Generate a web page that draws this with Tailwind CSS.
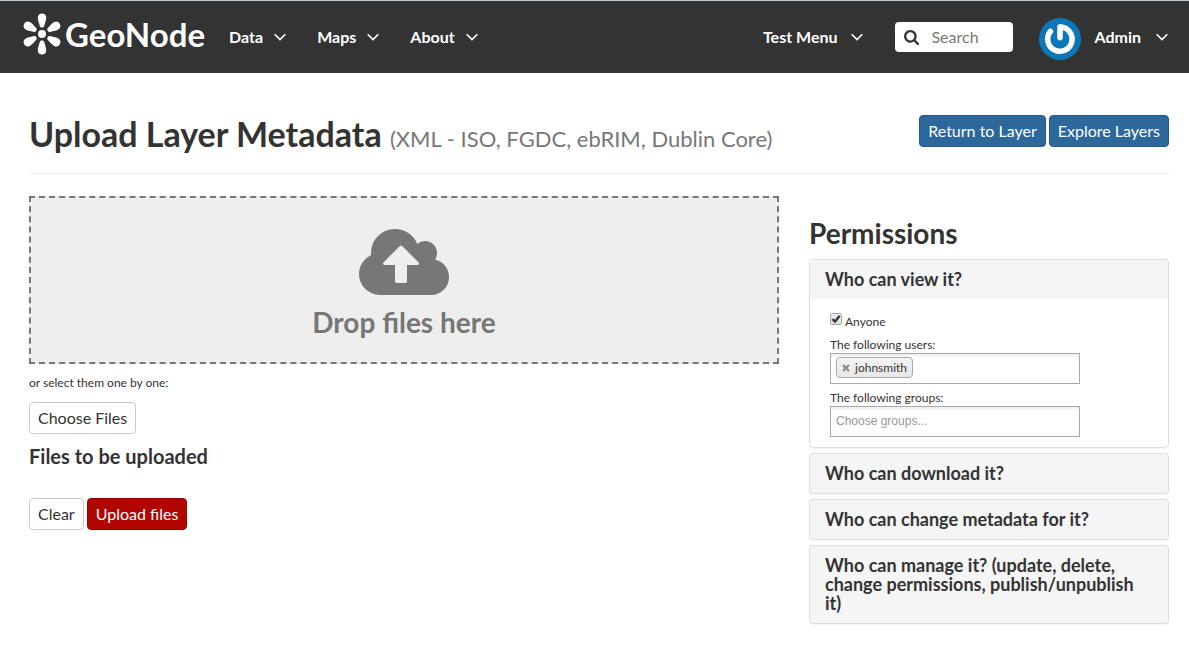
<!DOCTYPE html>
<html lang="en">
<head>
<meta charset="utf-8">
<meta name="viewport" content="width=device-width, initial-scale=1">
<title>Upload Layer Metadata - GeoNode</title>
<script src="https://cdn.jsdelivr.net/npm/@tailwindcss/browser@4"></script>
</head>
<body class="min-h-screen bg-white font-['Lato',sans-serif] text-[#333]">
<svg class="hidden" aria-hidden="true">
  <symbol id="chevron" viewBox="0 0 12 8"><path d="M0.7 1.2 L6 6.6 L11.3 1.2" fill="none" stroke="currentColor" stroke-width="1.6"/></symbol>
</svg>

<header class="flex h-[73px] items-center border-t border-[#bcc8d0] bg-[#333] pr-[21px] pl-[22px] text-base font-bold text-white">
  <a href="#" class="flex items-center pb-[6px]" aria-label="GeoNode home">
    <svg class="h-[42px] w-10" viewBox="0 0 40 42" fill="#fff" aria-hidden="true">
      <circle cx="20" cy="21" r="4"/>
      <path id="petal" d="M17.900 13.200 C17.300 11 15.800 7.500 15.800 4.500 C15.800 1.900 17.600 0.500 20 0.500 C22.400 0.500 24.200 1.900 24.200 4.500 C24.200 7.500 22.700 11 22.100 13.200 C21.700 14.900 18.300 14.900 17.900 13.200Z"/>
      <use href="#petal" transform="rotate(60 20 21)"/>
      <use href="#petal" transform="rotate(120 20 21)"/>
      <use href="#petal" transform="rotate(180 20 21)"/>
      <use href="#petal" transform="rotate(240 20 21)"/>
      <use href="#petal" transform="rotate(300 20 21)"/>
    </svg>
    <span class="ml-[3px] text-[33px] leading-10 font-bold">GeoNode</span>
  </a>
  <nav class="ml-6 flex flex-1 items-center" aria-label="Main">
    <button type="button" class="flex items-center gap-[11px]">Data <svg class="h-2 w-3" aria-hidden="true"><use href="#chevron"/></svg></button>
    <button type="button" class="ml-[31px] flex items-center gap-[11px]">Maps <svg class="h-2 w-3" aria-hidden="true"><use href="#chevron"/></svg></button>
    <button type="button" class="ml-[31px] flex items-center gap-[11px]">About <svg class="h-2 w-3" aria-hidden="true"><use href="#chevron"/></svg></button>
    <button type="button" class="ml-auto flex items-center gap-[14px]">Test Menu <svg class="h-2 w-3" aria-hidden="true"><use href="#chevron"/></svg></button>
  </nav>
  <label class="ml-8 flex h-[30px] w-[118px] items-center gap-3 rounded bg-white pl-[9px]">
    <svg class="size-[15px] shrink-0" viewBox="0 0 1664 1664" fill="#333" role="img" aria-label="Search"><path d="M1152 704q0-185-131.5-316.5T704 256 387.5 387.5 256 704t131.5 316.5T704 1152t316.5-131.5T1152 704zm512 832q0 52-38 90t-90 38q-54 0-90-38l-343-342q-179 124-399 124-143 0-273.5-55.5t-225-150-150-225T0 704t55.5-273.5 150-225 225-150T704 0t273.5 55.5 225 150 150 225T1408 704q0 220-124 399l343 343q37 37 37 90z"/></svg>
    <input type="text" placeholder="Search" class="w-full min-w-0 text-base font-normal text-[#333] outline-none placeholder:text-[#777]">
  </label>
  <button type="button" class="ml-[26px] flex items-center">
    <svg class="mt-1 size-[42px]" viewBox="0 0 42 42" aria-hidden="true">
      <circle cx="21" cy="21" r="21" fill="#0b76b8"/>
      <path d="M21 19.800 V9 A12.200 12.200 0 1 1 11.500 13.400" fill="none" stroke="#b9cfdf" stroke-width="5.600" stroke-linecap="round" stroke-linejoin="round"/>
      <path d="M21 19.400 V8.800 A12.200 12.200 0 1 1 11.500 13.200" fill="none" stroke="#fff" stroke-width="5" stroke-linecap="round" stroke-linejoin="round"/>
    </svg>
    <span class="ml-[13px]">Admin</span>
    <svg class="ml-[15px] h-2 w-3" aria-hidden="true"><use href="#chevron"/></svg>
  </button>
</header>

<main class="pt-[42px] pr-5 pb-6 pl-[29px]">
  <div class="flex items-start justify-between border-b border-[#eee] pb-[18px]">
    <h1 class="text-[34px] leading-[38px] font-bold">Upload Layer Metadata <small class="text-[22px] leading-8 font-normal text-[#777]">(XML - ISO, FGDC, ebRIM, Dublin Core)</small></h1>
    <div class="flex gap-[3px] text-base leading-[22px] text-white">
      <a href="#" class="rounded border border-[#265a87] bg-[#2c689c] px-2 py-1">Return to Layer</a>
      <a href="#" class="rounded border border-[#265a87] bg-[#2c689c] px-2 py-1">Explore Layers</a>
    </div>
  </div>

  <div class="mt-[22px] grid grid-cols-3 gap-[30px]">
    <section class="col-span-2">
      <div class="flex flex-col items-center border-2 border-dashed border-[#777] bg-[#eee] pt-[31px] pb-[23px] text-[#777]">
        <svg class="h-[66px] w-[90px]" viewBox="-64 128 1920 1408" fill="currentColor" aria-hidden="true"><path d="M1216 864q0-14-9-23L855 489q-9-9-23-9t-23 9L458 840q-10 12-10 24 0 14 9 23t23 9h224v352q0 13 9.500 22.500t22.500 9.500h192q13 0 22.500-9.500t9.500-22.500V896h224q13 0 22.500-9.500T1216 864zm640 288q0 159-112.500 271.500T1472 1536H384q-185 0-316.500-131.500T-64 1088q0-130 70-240t188-165q-2-30-2-43 0-212 150-362t362-150q156 0 285.500 87T1178 446q71-62 166-62 106 0 181 75t75 181q0 76-41 138 130 31 213.500 135.500T1856 1152z" fill-rule="evenodd"/></svg>
        <h2 class="mt-[11px] text-[28px] leading-[33px] font-bold">Drop files here</h2>
      </div>
      <p class="mt-[10px] text-xs leading-[18px]">or select them one by one:</p>
      <button type="button" class="mt-[10px] rounded border border-[#ccc] px-2 py-1 text-base leading-[22px]">Choose Files</button>
      <h3 class="mt-[10px] text-[20px] leading-6 font-bold">Files to be uploaded</h3>
      <div class="mt-[30px] flex gap-[3px] text-base leading-[22px]">
        <button type="button" class="rounded border border-[#ccc] px-2 py-1">Clear</button>
        <button type="button" class="rounded border border-[#9b0500] bg-[#b00600] px-2 py-1 text-white">Upload files</button>
      </div>
    </section>

    <aside class="pt-[21px]">
      <h2 class="text-[28px] leading-8 font-bold">Permissions</h2>
      <div class="mt-[10px] flex flex-col gap-[5px] text-[18px] leading-[19px]">
        <section class="overflow-hidden rounded border border-[#ddd] shadow-xs">
          <h3 class="bg-[#f5f5f5] px-[15px] py-[10px] font-bold"><button type="button" class="text-left">Who can view it?</button></h3>
          <div class="px-5 pt-[14px] pb-[10px] text-xs leading-[17px]">
            <label class="flex items-start">
              <input type="checkbox" checked class="peer size-3 shrink-0 appearance-none rounded-xs border border-[#aaa] bg-linear-to-b from-[#eee] to-[#ddd] bg-origin-border">
              <svg class="pointer-events-none -ml-3 size-3 shrink-0 opacity-0 peer-checked:opacity-100" viewBox="0 0 12 12" aria-hidden="true"><path d="M2.500 6.200 L5 8.600 L9.600 2.800" fill="none" stroke="#333" stroke-width="2.300"/></svg>
              <span class="ml-[3px]">Anyone</span>
            </label>
            <label for="users" class="mt-[6px] block">The following users:</label>
            <div class="flex h-[31px] w-[250px] items-start gap-2 border border-[#aaa] bg-linear-to-b from-[#eee] from-1% to-white to-15% px-[5px] pt-[3px]">
              <span class="flex h-[21px] shrink-0 items-center gap-[5px] rounded border border-[#aaa] bg-linear-to-b from-[#f4f4f4] to-[#e8e8e8] px-[5px] leading-[19px]">
                <button type="button" aria-label="Remove johnsmith"><svg class="size-2" viewBox="0 0 8 8" aria-hidden="true"><path d="M1 1 L7 7 M7 1 L1 7" stroke="#888" stroke-width="2.200"/></svg></button>
                johnsmith
              </span>
              <input id="users" type="text" class="w-full min-w-0 outline-none">
            </div>
            <label for="groups" class="mt-[5px] block">The following groups:</label>
            <input id="groups" type="text" placeholder="Choose groups..." class="block h-[31px] w-[250px] border border-[#aaa] bg-linear-to-b from-[#eee] from-1% to-white to-15% px-[5px] pb-[2px] font-['Liberation_Sans',sans-serif] outline-none placeholder:text-[#999]">
          </div>
        </section>
        <h3 class="rounded border border-[#ddd] bg-[#f5f5f5] px-[15px] py-[10px] font-bold shadow-xs"><button type="button" class="text-left">Who can download it?</button></h3>
        <h3 class="rounded border border-[#ddd] bg-[#f5f5f5] px-[15px] py-[10px] font-bold shadow-xs"><button type="button" class="text-left">Who can change metadata for it?</button></h3>
        <h3 class="rounded border border-[#ddd] bg-[#f5f5f5] px-[15px] py-[10px] font-bold shadow-xs"><button type="button" class="text-left">Who can manage it? (update, delete, change permissions, publish/unpublish it)</button></h3>
      </div>
    </aside>
  </div>
</main>
</body>
</html>
